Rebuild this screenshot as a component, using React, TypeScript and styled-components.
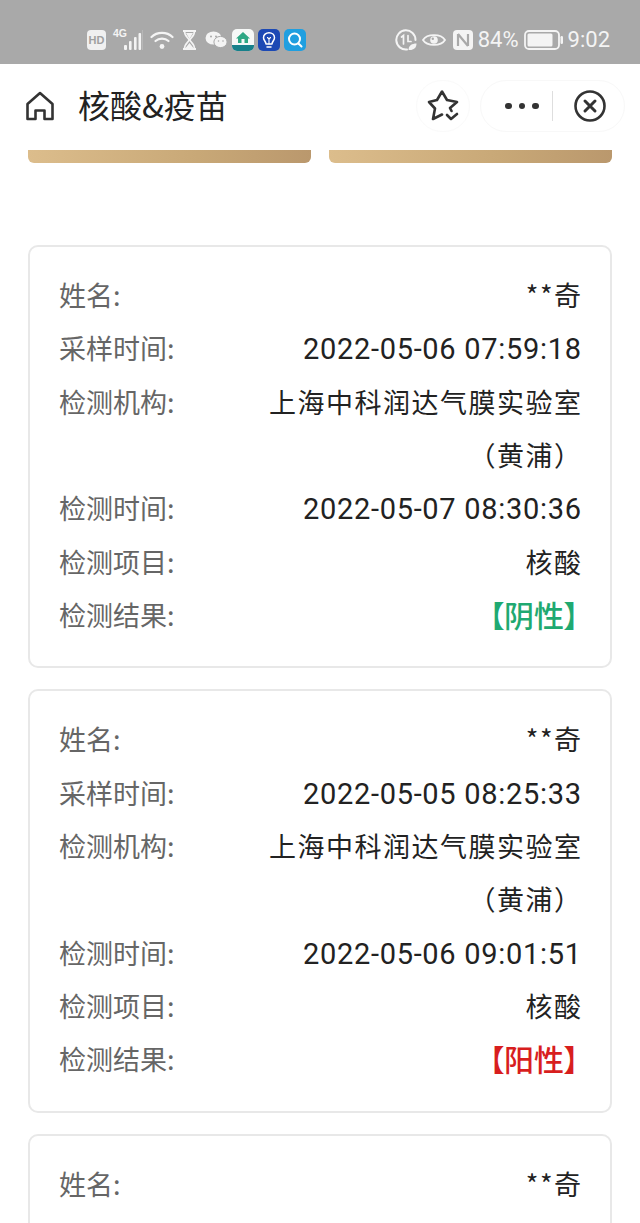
import styled, { createGlobalStyle } from 'styled-components';

const GlobalStyle = createGlobalStyle`
  html, body {
    margin: 0;
    padding: 0;
    background: #fff;
  }
  body {
    font-family: "Roboto", "Noto Sans CJK SC", sans-serif;
  }
`;

const Page = styled.div`
  width: 640px;
  height: 1223px;
  overflow: hidden;
  background: #fff;
`;

const StatusBar = styled.div`
  height: 64px;
  background: #a9a9a9;
  display: flex;
  align-items: center;
  padding: 15px 30px 0 87px;
  box-sizing: border-box;
  color: #f4f4f4;
`;

const StatusGroup = styled.div<{ $gap: number }>`
  display: flex;
  align-items: center;
  gap: ${(p) => p.$gap}px;
`;

const AppGroup = styled(StatusGroup)`
  margin-left: 3px;
`;

const RightGroup = styled(StatusGroup)`
  margin-left: auto;
`;

const HdBadge = styled.span`
  width: 19px;
  height: 20px;
  border-radius: 4px;
  background: #f0f0f0;
  color: #a0a0a0;
  font: 700 11px "Liberation Sans", sans-serif;
  display: flex;
  align-items: center;
  justify-content: center;
`;

const SignalWrap = styled.div`
  width: 30px;
  height: 22px;
  position: relative;
`;

const NetLabel = styled.span`
  position: absolute;
  left: 0;
  top: -2px;
  font: 700 10.5px "Liberation Sans", sans-serif;
  color: #f4f4f4;
`;

const AppTile = styled.div<{ $bg: string }>`
  width: 22px;
  height: 22px;
  border-radius: 5px;
  background: ${(p) => p.$bg};
  overflow: hidden;
`;

const StatusText = styled.span`
  font: 400 22px "Roboto", sans-serif;
  line-height: 26px;
  white-space: nowrap;
`;

const NavBar = styled.div`
  height: 86px;
  background: #fff;
  display: flex;
  align-items: center;
  padding: 0 15px 2px 26px;
  box-sizing: border-box;
`;

const NavTitle = styled.div`
  margin: 0 0 4px 24px;
  font-size: 32px;
  line-height: 40px;
  color: #222;
  font-family: "Noto Sans CJK SC", sans-serif;
  white-space: nowrap;
`;

const StarButton = styled.div`
  margin-left: auto;
  width: 54px;
  height: 52px;
  border: 1px solid #fafafa;
  border-radius: 26px;
  box-sizing: border-box;
  display: flex;
  align-items: center;
  justify-content: center;
`;

const Capsule = styled.div`
  margin-left: 10px;
  width: 145px;
  height: 52px;
  border: 1px solid #f8f8f8;
  border-radius: 26px;
  box-sizing: border-box;
  display: flex;
  align-items: center;
  padding: 0 18px 0 24px;
`;

const Dots = styled.div`
  display: flex;
  gap: 7px;
`;

const Dot = styled.span`
  width: 6.5px;
  height: 6.5px;
  border-radius: 50%;
  background: #333;
`;

const CapsuleDivider = styled.span`
  width: 1px;
  height: 30px;
  background: #dedede;
  margin: 0 21px 0 13px;
`;

const Content = styled.div`
  padding: 0 28px;
`;

const GoldRow = styled.div`
  display: flex;
  gap: 18px;
  margin-bottom: 82px;
`;

const GoldBar = styled.div`
  flex: 1;
  height: 13px;
  border-radius: 0 0 6px 6px;
  background: linear-gradient(90deg, #dcbd8c, #c8a877 60%, #ba986d);
`;

const Card = styled.div`
  border: 2px solid #e8e8e8;
  border-radius: 10px;
  padding: 21px 29px 25px;
  margin-bottom: 21px;
  background: #fff;
`;

const Row = styled.div`
  display: flex;
  justify-content: space-between;
  font-size: 27px;
  line-height: 53.33px;
  font-family: "Noto Sans CJK SC", sans-serif;
`;

const Label = styled.span`
  color: #666;
  white-space: nowrap;
`;

const Value = styled.span`
  max-width: 330px;
  margin-right: -1.5px;
  text-align: right;
  letter-spacing: 1.5px;
  color: #222;
`;

// Roboto sits higher in the line than the CJK face, so it is nudged down to share a baseline
const TimeValue = styled(Value)`
  font-family: "Roboto", sans-serif;
  font-size: 29px;
  letter-spacing: 0.7px;
  margin-right: -0.7px;
  padding-top: 3px;
  line-height: 50.33px;
`;

// 【】 sit tight against the characters, so the proportional glyphs are used here
const ResultValue = styled(Value)<{ $tone: 'pass' | 'fail' }>`
  font-size: 30px;
  font-weight: 500;
  letter-spacing: 0;
  margin-right: 2px;
  font-feature-settings: "palt";
  color: ${(p) => (p.$tone === 'pass' ? '#1fa971' : '#d81e1e')};
`;

const HomeIcon = () => (
  <svg width="28" height="30" viewBox="0 0 28 30" fill="none" stroke="#333" strokeWidth="2.6" strokeLinejoin="round">
    <path d="M14 2 L26.5 13 V28 H18.5 V19.5 H9.5 V28 H1.5 V13 Z" />
  </svg>
);

const StarIcon = () => (
  <svg width="32" height="32" viewBox="0 0 32 32" fill="none" stroke="#333" strokeWidth="2.6" strokeLinejoin="round" strokeLinecap="round">
    <path d="M24.5 21 L23 18 L30 12 L20 10 L15 1.5 L10 10 L2 12 L8 18.5 L6 29 L15 24.5" />
    <path d="M20 25 L24 29 L30 24" />
  </svg>
);

const CloseIcon = () => (
  <svg width="32" height="32" viewBox="0 0 32 32" fill="none" stroke="#333" strokeLinecap="round">
    <circle cx="16" cy="16" r="14.5" strokeWidth="2.6" />
    <path d="M11 11 L21 21 M21 11 L11 21" strokeWidth="3" />
  </svg>
);

const SignalBars = () => (
  <svg width="30" height="22" viewBox="0 0 30 22" fill="#f4f4f4" style={{ display: 'block' }}>
    <rect x="11" y="16" width="3" height="5" rx="1" />
    <rect x="16" y="12" width="2.6" height="9" rx="1" />
    <rect x="21" y="8" width="2.6" height="13" rx="1" />
    <rect x="25.5" y="4" width="2.6" height="17" rx="1" />
    <rect x="29.4" y="1" width="0.6" height="20" fill="#c4c4c4" />
  </svg>
);

const WifiIcon = () => (
  <svg width="24" height="20" viewBox="0 0 24 20" fill="none" stroke="#f4f4f4" strokeWidth="2.2" strokeLinecap="round">
    <path d="M1.5 7 C7 1.5 17 1.5 22.5 7" />
    <path d="M5.5 11 C9 7.8 15 7.8 18.5 11" />
    <circle cx="12" cy="16.5" r="2.4" fill="#f4f4f4" stroke="none" />
  </svg>
);

const HourglassIcon = () => (
  <svg width="17" height="20" viewBox="0 0 17 20" fill="none" stroke="#f4f4f4" strokeWidth="1.6">
    <path d="M2 1 H15 M2 19 H15" strokeWidth="2" />
    <path d="M3.5 1 C3.5 7 8 8 8 10 C8 12 3.5 13 3.5 19 M13.5 1 C13.5 7 9 8 9 10 C9 12 13.5 13 13.5 19" />
    <path d="M5 3 H12 L8.5 9 Z M4.5 18 L8.5 13 L12.5 18 Z" fill="#f4f4f4" stroke="none" />
  </svg>
);

const WechatIcon = () => (
  <svg width="24" height="18" viewBox="0 0 24 18" fill="#f4f4f4">
    <ellipse cx="8.5" cy="7" rx="8" ry="6.6" />
    <ellipse cx="15.5" cy="11" rx="6.6" ry="5.6" stroke="#a9a9a9" strokeWidth="1" />
    <circle cx="6" cy="5.5" r="1" fill="#a9a9a9" />
    <circle cx="11" cy="5.5" r="1" fill="#a9a9a9" />
    <circle cx="13.5" cy="10" r="0.8" fill="#a9a9a9" />
    <circle cx="18" cy="10" r="0.8" fill="#a9a9a9" />
  </svg>
);

const VmallTile = () => (
  <AppTile $bg="#f6f8f7">
    <svg width="22" height="22" viewBox="0 0 22 22">
      <path d="M11 3 L18 9.5 H16 V14 H6 V9.5 H4 Z" fill="#2ea784" />
      <rect x="9.5" y="10" width="3" height="4" fill="#f6f8f7" />
      <rect x="0" y="16" width="22" height="6" fill="#17808a" />
    </svg>
  </AppTile>
);

const BulbTile = () => (
  <AppTile $bg="#1c49b4">
    <svg width="22" height="22" viewBox="0 0 22 22" fill="none" stroke="#fff" strokeWidth="1.5" strokeLinecap="round" strokeLinejoin="round">
      <path d="M8 15 C8 12.5 5.5 11.5 5.5 8.8 C5.5 5.8 8 3.8 11 3.8 C14 3.8 16.5 5.8 16.5 8.8 C16.5 11.5 14 12.5 14 15 Z" />
      <path d="M9 18 H13" />
      <path d="M11 15 V10 M9.5 8.5 L11 10 L12.5 8.5" strokeWidth="1.1" />
    </svg>
  </AppTile>
);

const SearchTile = () => (
  <AppTile $bg="#1f9fe0">
    <svg width="22" height="22" viewBox="0 0 22 22" fill="none" stroke="#fff" strokeWidth="2" strokeLinecap="round">
      <circle cx="10.5" cy="10" r="5.5" />
      <path d="M14.5 14.5 L17.5 17.5" />
    </svg>
  </AppTile>
);

const LeafClockIcon = () => (
  <svg width="22" height="22" viewBox="0 0 22 22" fill="none" stroke="#f4f4f4" strokeWidth="2" strokeLinecap="round">
    <path d="M12 20.5 A9.6 9.6 0 1 1 20.5 11" />
    <path d="M6.5 8 L8.5 6.5 V15 M13 6.5 V12.5 H16" strokeWidth="1.7" />
    <path d="M13.5 21 C13.5 16.5 17 14.5 21.5 14.5 C21.5 19 18.5 21.5 13.5 21 Z" fill="#f4f4f4" stroke="none" />
  </svg>
);

const EyeIcon = () => (
  <svg width="24" height="16" viewBox="0 0 24 16" fill="none" stroke="#f4f4f4" strokeWidth="1.8">
    <path d="M1 8 C5 1.5 19 1.5 23 8 C19 14.5 5 14.5 1 8 Z" />
    <circle cx="12" cy="8" r="3.8" fill="#f4f4f4" stroke="none" />
    <circle cx="10.8" cy="6.8" r="1.2" fill="#a9a9a9" stroke="none" />
  </svg>
);

const NfcIcon = () => (
  <svg width="22" height="20" viewBox="0 0 22 20">
    <rect x="2" y="0" width="20" height="20" rx="4" fill="#f4f4f4" />
    <path d="M7 4 V16 M17 4 V16 M7 4 L17 16" fill="none" stroke="#a9a9a9" strokeWidth="2.2" />
  </svg>
);

const BatteryIcon = () => (
  <svg width="39" height="20" viewBox="0 0 39 20">
    <rect x="1" y="1" width="34" height="18" rx="4" fill="none" stroke="#f4f4f4" strokeWidth="1.8" />
    <rect x="3.5" y="3.5" width="25" height="13" rx="1.5" fill="#f4f4f4" />
    <rect x="36.5" y="6" width="2.5" height="8" rx="1.2" fill="#f4f4f4" />
  </svg>
);

type TestRecord = {
  sampledAt: string;
  testedAt: string;
  result: string;
  tone: 'pass' | 'fail';
};

const records: TestRecord[] = [
  { sampledAt: '2022-05-06 07:59:18', testedAt: '2022-05-07 08:30:36', result: '【阴性】', tone: 'pass' },
  { sampledAt: '2022-05-05 08:25:33', testedAt: '2022-05-06 09:01:51', result: '【阳性】', tone: 'fail' },
];

const RecordCard = ({ record }: { record: TestRecord }) => (
  <Card>
    <Row><Label>姓名:</Label><Value>**奇</Value></Row>
    <Row><Label>采样时间:</Label><TimeValue>{record.sampledAt}</TimeValue></Row>
    <Row><Label>检测机构:</Label><Value>上海中科润达气膜实验室（黄浦）</Value></Row>
    <Row><Label>检测时间:</Label><TimeValue>{record.testedAt}</TimeValue></Row>
    <Row><Label>检测项目:</Label><Value>核酸</Value></Row>
    <Row><Label>检测结果:</Label><ResultValue $tone={record.tone}>{record.result}</ResultValue></Row>
  </Card>
);

const App = () => (
  <Page>
    <GlobalStyle />
    <StatusBar>
      <StatusGroup $gap={7}>
        <HdBadge>HD</HdBadge>
        <SignalWrap>
          <NetLabel>4G</NetLabel>
          <SignalBars />
        </SignalWrap>
        <WifiIcon />
        <HourglassIcon />
        <WechatIcon />
      </StatusGroup>
      <AppGroup $gap={4}>
        <VmallTile />
        <BulbTile />
        <SearchTile />
      </AppGroup>
      <RightGroup $gap={5}>
        <LeafClockIcon />
        <EyeIcon />
        <NfcIcon />
        <StatusText>84%</StatusText>
        <BatteryIcon />
        <StatusText>9:02</StatusText>
      </RightGroup>
    </StatusBar>
    <NavBar>
      <HomeIcon />
      <NavTitle>核酸&amp;疫苗</NavTitle>
      <StarButton>
        <StarIcon />
      </StarButton>
      <Capsule>
        <Dots>
          <Dot />
          <Dot />
          <Dot />
        </Dots>
        <CapsuleDivider />
        <CloseIcon />
      </Capsule>
    </NavBar>
    <Content>
      <GoldRow>
        <GoldBar />
        <GoldBar />
      </GoldRow>
      {records.map((record) => (
        <RecordCard key={record.sampledAt} record={record} />
      ))}
      <Card>
        <Row><Label>姓名:</Label><Value>**奇</Value></Row>
      </Card>
    </Content>
  </Page>
);

export default App;
